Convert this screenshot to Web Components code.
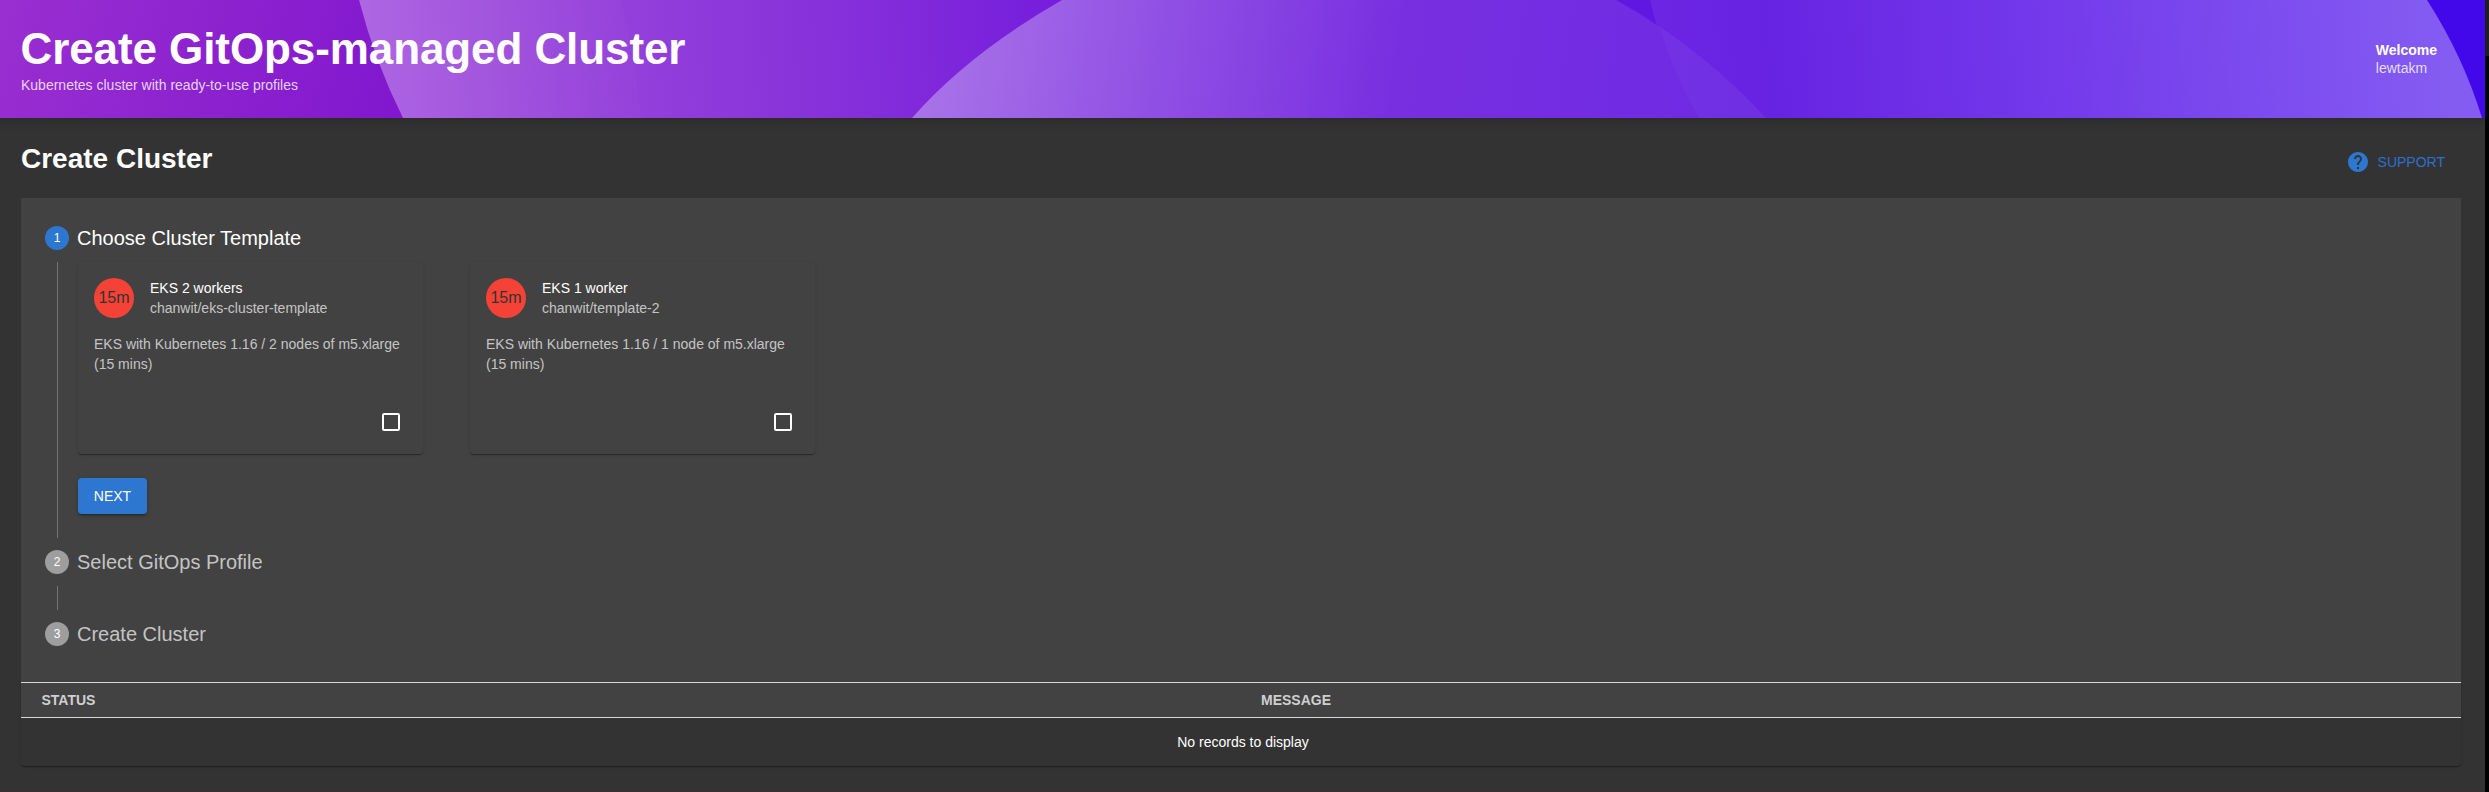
<!DOCTYPE html>
<html lang="en">
<head>
<meta charset="utf-8">
<title>Create GitOps-managed Cluster</title>
<style>
html,body{margin:0;height:100%;overflow:hidden;background:#000}
body{font-family:"Liberation Sans",Arial,sans-serif;font-size:14px;color:#fff}
</style>
</head>
<body>
<app-page>
  <page-header slot="header" heading="Create GitOps-managed Cluster" subtitle="Kubernetes cluster with ready-to-use profiles">
    <header-label label="Welcome">lewtakm</header-label>
  </page-header>
  <content-header heading="Create Cluster"><support-button>SUPPORT</support-button></content-header>
  <info-panel>
    <stepper-step number="1" heading="Choose Cluster Template" active>
      <card-row>
        <template-card avatar="15m" heading="EKS 2 workers" repo="chanwit/eks-cluster-template">EKS with Kubernetes 1.16 / 2 nodes of m5.xlarge (15 mins)</template-card>
        <template-card avatar="15m" heading="EKS 1 worker" repo="chanwit/template-2">EKS with Kubernetes 1.16 / 1 node of m5.xlarge (15 mins)</template-card>
      </card-row>
      <primary-button>NEXT</primary-button>
    </stepper-step>
    <stepper-step number="2" heading="Select GitOps Profile" line></stepper-step>
    <stepper-step number="3" heading="Create Cluster"></stepper-step>
  </info-panel>
  <status-table></status-table>
</app-page>
<script>
const define = (name, render) => customElements.define(name, class extends HTMLElement {
  connectedCallback() {
    if (this.shadowRoot) return;
    const t = document.createElement('template');
    t.innerHTML = render(this);
    this.attachShadow({ mode: 'open' }).append(t.content.cloneNode(true));
  }
});
const at = (el, n) => el.getAttribute(n) || '';

define('app-page', () => `
<style>
:host{display:grid;grid-template-columns:1fr 4px;height:792px}
.page{background:#333;display:flex;flex-direction:column;box-sizing:border-box;border-bottom:1px solid #382f34}
.content{padding:0 24px 0 21px}
.scroll{background:#000}.thumb{height:56px;background:#222}
</style>
<div class="page"><slot name="header"></slot><div class="content"><slot></slot></div></div>
<div class="scroll"><div class="thumb"></div></div>`);

define('page-header', el => `
<style>
:host{display:grid;height:118px;box-shadow:0 0 8px 3px rgba(20,20,20,.3);position:relative}
svg,.bar{grid-area:1/1;width:100%;height:118px;min-width:0}
svg{display:block}
.bar{position:relative;display:flex;justify-content:space-between;box-sizing:border-box;padding:24px 48px 0 20px}
h1{font-size:44px;line-height:50px;margin:0;font-weight:700;letter-spacing:-.09px;padding-left:.5px}
p{margin:3px 0 0 1px;font-size:14px;line-height:16px;color:rgba(255,255,255,.8)}
</style>
<svg viewBox="0 0 2485 118" preserveAspectRatio="none">
<defs>
<linearGradient id="b" gradientUnits="userSpaceOnUse" x1="0" y1="0" x2="410" y2="110"><stop offset="0" stop-color="#992fd0"/><stop offset="1" stop-color="#8017ce"/></linearGradient>
<linearGradient id="s1" gradientUnits="userSpaceOnUse" x1="360" y1="0" x2="1060" y2="-40"><stop offset="0" stop-color="#ad63e2"/><stop offset=".2" stop-color="#a050dd"/><stop offset=".37" stop-color="#9340db"/><stop offset=".7" stop-color="#842fda"/><stop offset="1" stop-color="#751ddc"/></linearGradient>
<linearGradient id="s2" gradientUnits="userSpaceOnUse" x1="915" y1="59" x2="1700" y2="180"><stop offset="0" stop-color="#aa74e8"/><stop offset=".3" stop-color="#9150e4"/><stop offset=".6" stop-color="#782fe0"/><stop offset="1" stop-color="#6f2ae3"/></linearGradient>
<linearGradient id="s3" gradientUnits="userSpaceOnUse" x1="1660" y1="0" x2="2440" y2="-60"><stop offset="0" stop-color="#6c25e3"/><stop offset=".12" stop-color="#6722e2"/><stop offset=".5" stop-color="#743aeb"/><stop offset="1" stop-color="#845cf2"/></linearGradient>
</defs>
<path fill="url(#b)" d="M0 0H420V118H0z"/>
<path fill="url(#s1)" d="M359 0Q375 62 403 118H1100V0z"/>
<path fill="#fff" opacity=".018" d="M359 0Q375 62 403 118H641Q636 50 620 0z"/>
<path fill="#6017e1" d="M1600 0H1760V118H1600z"/>
<path fill="#4208ea" d="M2400 0H2485V118H2400z"/>
<path fill="url(#s3)" d="M1650 0Q1664 60 1699 118H2482Q2463 56 2427 0z"/>
<path fill="url(#s2)" d="M912 118Q968 54 1062 0H1616Q1638 12 1660 27Q1672 72 1699 118z"/>
<path fill="#fff" opacity=".06" d="M1660 27Q1720 68 1766 118H1699Q1672 72 1660 27z"/>
</svg>
<div class="bar"><div><h1>${at(el,'heading')}</h1><p>${at(el,'subtitle')}</p></div><slot></slot></div>`);

define('header-label', el => `
<style>:host{display:block;padding-top:17px;line-height:18px;font-size:14px}b{display:block}span{color:rgba(255,255,255,.8)}</style>
<b>${at(el,'label')}</b><span><slot></slot></span>`);

define('content-header', el => `
<style>:host{display:flex;justify-content:space-between;height:80px;box-sizing:border-box;padding:24px 16px 0 0}
h2{margin:0;font-size:28px;line-height:34px}</style>
<h2>${at(el,'heading')}</h2><slot></slot>`);

define('support-button', () => `
<style>:host{display:flex;align-items:center;gap:8px;height:24px;margin-top:8px;color:#2e6fcf;font-size:14px}svg{width:24px;height:24px;fill:#2e77d0}</style>
<svg viewBox="0 0 24 24"><path d="M12 2C6.48 2 2 6.48 2 12s4.48 10 10 10 10-4.48 10-10S17.52 2 12 2zm1 17h-2v-2h2v2zm2.07-7.75l-.9.92C13.45 12.9 13 13.5 13 15h-2v-.5c0-1.1.45-2.1 1.17-2.83l1.24-1.26c.37-.36.59-.86.59-1.41 0-1.1-.9-2-2-2s-2 .9-2 2H8c0-2.21 1.79-4 4-4s4 1.79 4 4c0 .88-.36 1.68-.93 2.25z"/></svg><span><slot></slot></span>`);

define('info-panel', () => `
<style>:host{display:block;height:484px;box-sizing:border-box;background:#424242;padding:24px}</style><slot></slot>`);

define('stepper-step', el => {
  const on = el.hasAttribute('active');
  return `
<style>
:host{display:block}
.head{display:flex;align-items:center;gap:8px;height:32px}
.n{width:24px;height:24px;border-radius:50%;background:${on ? '#2e77d0' : '#9e9e9e'};font-size:12px;line-height:24px;text-align:center}
h3{margin:0;font-size:20px;font-weight:400;line-height:32px;color:${on ? '#fff' : 'rgba(255,255,255,.7)'}}
.body{margin:8px 0 8px 12px;border-left:1px solid #757575;padding-left:20px;box-sizing:border-box;height:${on ? 276 : 24}px}
</style>
<div class="head"><div class="n">${at(el,'number')}</div><h3>${at(el,'heading')}</h3></div>
${on || el.hasAttribute('line') ? '<div class="body"><slot></slot></div>' : ''}`;
});

define('card-row', () => `<style>:host{display:flex;gap:47px;margin-bottom:24px}</style><slot></slot>`);

define('template-card', el => `
<style>
:host{display:flex;flex-direction:column;width:345px;height:192px;box-sizing:border-box;padding:16px;border-radius:4px;background:#424242;line-height:20px;color:rgba(255,255,255,.7);box-shadow:0 2px 1px -1px rgba(0,0,0,.2),0 1px 1px rgba(0,0,0,.14),0 1px 3px rgba(0,0,0,.12)}
.top{display:flex;gap:16px;margin-bottom:16px}
.av{width:40px;height:40px;border-radius:50%;background:#f44336;color:#333;text-align:center;line-height:39px;font-size:16px;letter-spacing:0}
.t{color:#fff}
svg{align-self:flex-end;width:24px;height:24px;margin:36px 4px 0 0;fill:#fff}
</style>
<div class="top"><div class="av">${at(el,'avatar')}</div><div><div class="t">${at(el,'heading')}</div><div>${at(el,'repo')}</div></div></div>
<div><slot></slot></div>
<svg viewBox="0 0 24 24"><path d="M19 5v14H5V5h14m0-2H5c-1.1 0-2 .9-2 2v14c0 1.1.9 2 2 2h14c1.1 0 2-.9 2-2V5c0-1.1-.9-2-2-2z"/></svg>`);

define('primary-button', () => `
<style>:host{display:block;width:69px;height:36px;line-height:36px;text-align:center;border-radius:4px;background:#2e77d0;font-size:14px;letter-spacing:0;box-shadow:0 3px 1px -2px rgba(0,0,0,.2),0 2px 2px rgba(0,0,0,.14),0 1px 5px rgba(0,0,0,.12)}</style><slot></slot>`);

define('status-table', () => `
<style>
:host{display:block;border-radius:0 0 4px 4px;background:#333;box-shadow:0 2px 1px -1px rgba(0,0,0,.2),0 1px 1px rgba(0,0,0,.14),0 1px 3px rgba(0,0,0,.12)}
.h{display:grid;grid-template-columns:1fr 1fr;height:36px;box-sizing:border-box;border-top:1px solid #d8d8d8;border-bottom:1px solid #d8d8d8;background:#424242;color:#cfcfcf;font-weight:700;line-height:35px}
.h span{padding-left:20px}
.h span:first-child{padding-left:20.5px}
.e{height:48px;line-height:48px;text-align:center;padding-left:4px}
</style>
<div class="h"><span>STATUS</span><span>MESSAGE</span></div><div class="e">No records to display</div>`);
</script>
</body>
</html>
